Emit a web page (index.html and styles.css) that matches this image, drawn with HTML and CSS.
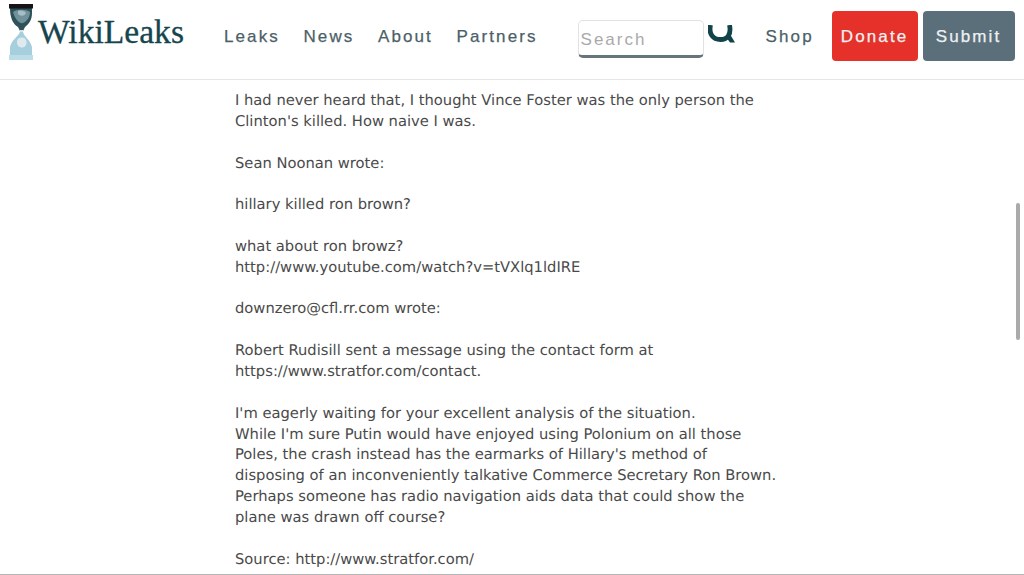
FILE: index.html
```html
<!DOCTYPE html>
<html lang="en">
<head>
<meta charset="utf-8">
<title>WikiLeaks</title>
<link rel="stylesheet" href="styles.css">
</head>
<body>
<header class="top">
  <a class="brand" href="#">
    <svg class="glass" width="24" height="56" viewBox="0 0 24 56" aria-hidden="true">
      <path d="M1 4H23V9C23 16 20 20 16 23L14 27H11L9 23C4 20 1 14 1 4Z" fill="#2f515a"/>
      <path d="M4 8C8 5 17 5 21 8C21 13 18 17 14 19C10 20 6 15 4 8Z" fill="#6f929b"/>
      <path d="M9 7C12 6 16 7 17 9C15 13 11 12 9 10Z" fill="#a7bec4"/>
      <rect x="0" y="0" width="24" height="4.500" fill="#151515"/>
      <path d="M11 26H14L14.500 34H10.500Z" fill="#d5e2e6"/>
      <path d="M11 28C9 33 3 35 1 43V52H23V43C21 35 15 33 14 28Z" fill="#a6cfdd"/>
      <path d="M9 35C12 33 15 33 17 36C19 41 15 45 11 43C8 42 7 38 9 35Z" fill="#dfeaee"/>
      <rect x="0" y="51" width="24" height="5" fill="#bcdde8"/>
    </svg>
    <span class="word">WikiLeaks</span>
  </a>
  <nav class="nav">
    <a href="#">Leaks</a>
    <a href="#">News</a>
    <a href="#">About</a>
    <a href="#">Partners</a>
  </nav>
  <div class="search">
    <div class="field">Search</div>
    <svg class="glyph" width="27" height="18" viewBox="0 0 27 18" aria-hidden="true">
      <path d="M2.500 0C0.500 9 5 14.500 12.500 14.500C19.500 14.500 23.500 9.500 21.500 0" fill="none" stroke="#12434b" stroke-width="4.800"/>
      <path d="M18 12L22 17.500H27L22.500 10Z" fill="#12434b"/>
    </svg>
  </div>
  <a class="shop" href="#">Shop</a>
  <a class="btn donate" href="#">Donate</a>
  <a class="btn submit" href="#">Submit</a>
</header>
<main class="mail">
  <p>I had never heard that, I thought Vince Foster was the only person the<br>Clinton's killed. How naive I was.</p>
  <p>Sean Noonan wrote:</p>
  <p>hillary killed ron brown?</p>
  <p>what about ron browz?<br>http://www.youtube.com/watch?v=tVXlq1ldIRE</p>
  <p>downzero@cfl.rr.com wrote:</p>
  <p>Robert Rudisill sent a message using the contact form at<br>https://www.stratfor.com/contact.</p>
  <p>I'm eagerly waiting for your excellent analysis of the situation.<br>While I'm sure Putin would have enjoyed using Polonium on all those<br>Poles, the crash instead has the earmarks of Hillary's method of<br>disposing of an inconveniently talkative Commerce Secretary Ron Brown.<br>Perhaps someone has radio navigation aids data that could show the<br>plane was drawn off course?</p>
  <p>Source: http://www.stratfor.com/</p>
</main>
<div class="scrollbar"></div>
<div class="baseline"></div>
</body>
</html>
```
FILE: styles.css
```css
html, body {
  margin: 0;
  height: 575px;
  overflow: hidden;
  background: #fff;
}
body {
  display: flex;
  flex-direction: column;
  font-family: "Liberation Sans", Arial, sans-serif;
}
a { text-decoration: none; }
.top {
  height: 79px;
  flex: none;
  display: flex;
  align-items: center;
  border-bottom: 1px solid #e6e6e6;
}
.brand {
  display: flex;
  align-items: flex-start;
  margin-left: 9px;
  width: 215px;
  height: 79px;
}
.glass { margin-top: 4px; }
.word {
  font-family: "Liberation Serif", serif;
  font-size: 33.600px;
  line-height: 38px;
  color: #17454e;
  -webkit-text-stroke: 0.3px #17454e;
  margin: 13px 0 0 5px;
}
.nav {
  display: flex;
  gap: 23.600px;
  margin-top: -6px;
}
.nav a, .shop {
  font-size: 17px;
  letter-spacing: 2.100px;
  color: #4c5f68;
  -webkit-text-stroke: 0.25px #4c5f68;
}
.search {
  display: flex;
  align-items: flex-start;
  margin-left: 40px;
  height: 79px;
}
.field {
  box-sizing: border-box;
  width: 126px;
  height: 38px;
  margin-top: 20px;
  padding: 9px 0 0 2px;
  border: 1px solid #e2e2e2;
  border-bottom: 3px solid #66757b;
  border-radius: 5px;
  font-size: 17px;
  line-height: 20px;
  letter-spacing: 2px;
  color: #a9a9a9;
}
.glyph { margin: 25px 0 0 4px; }
.shop {
  margin: -6px 0 0 31px;
  width: 66px;
}
.btn {
  box-sizing: border-box;
  height: 50px;
  margin-top: -7px;
  border-radius: 4px;
  font-size: 17px;
  line-height: 52px;
  letter-spacing: 2.100px;
  text-align: center;
  color: #eef1f2;
  -webkit-text-stroke: 0.25px #eef1f2;
}
.donate { width: 86px; background: #e5312a; }
.submit { width: 92px; margin-left: 5px; background: #5b6f7b; }
.mail {
  margin-left: 235px;
  padding-top: 11px;
  font-family: "DejaVu Sans", Verdana, sans-serif;
  font-size: 14.720px;
  line-height: 20.850px;
  color: #4a4a4a;
  text-rendering: geometricPrecision;
}
.mail p { margin: 0 0 20.850px; white-space: nowrap; }
.scrollbar {
  position: absolute;
  left: 1016px;
  top: 203px;
  width: 4px;
  height: 137px;
  border-radius: 2px;
  background: #aaa;
}
.baseline {
  position: absolute;
  left: 0;
  right: 0;
  top: 574px;
  height: 1px;
  background: #b5b5b5;
}
```
